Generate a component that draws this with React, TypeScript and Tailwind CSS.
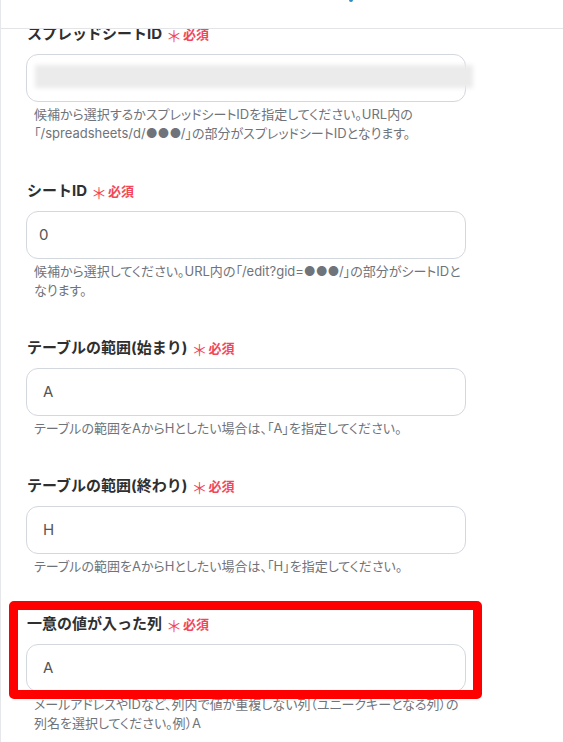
import React from "react";

type Field = {
  label: string;
  value?: string;
  valuePad: string;
  help: React.ReactNode;
  blurred?: boolean;
  highlight?: boolean;
};

const fields: Field[] = [
  {
    label: "スプレッドシートID",
    valuePad: "pl-3",
    blurred: true,
    help: (
      <>
        候補から選択するかスプレッドシートIDを指定してください。URL内の
        <br />
        「/spreadsheets/d/●●●/」の部分がスプレッドシートIDとなります。
      </>
    ),
  },
  {
    label: "シートID",
    value: "0",
    valuePad: "pl-3",
    help: (
      <>
        候補から選択してください。URL内の「/edit?gid=●●●/」の部分がシートIDと
        <br />
        なります。
      </>
    ),
  },
  {
    label: "テーブルの範囲(始まり)",
    value: "A",
    valuePad: "pl-4",
    help: "テーブルの範囲をAからHとしたい場合は、「A」を指定してください。",
  },
  {
    label: "テーブルの範囲(終わり)",
    value: "H",
    valuePad: "pl-4",
    help: "テーブルの範囲をAからHとしたい場合は、「H」を指定してください。",
  },
  {
    label: "一意の値が入った列",
    value: "A",
    valuePad: "pl-4",
    highlight: true,
    help: (
      <>
        メールアドレスやIDなど、列内で値が重複しない列（ユニークキーとなる列）の
        <br />
        列名を選択してください。例）A
      </>
    ),
  },
];

function FieldBlock({ field, first }: { field: Field; first: boolean }) {
  return (
    <div className={`relative ${first ? "" : "mt-9"}`}>
      {/* red annotation frame */}
      {field.highlight && (
        <div className="absolute -left-[16px] -top-[11px] w-[473px] h-[98px] border-[9px] border-[#ff0000] rounded-[5px] z-10 pointer-events-none" />
      )}
      <div className="flex items-center h-6 pl-[2px] text-[15px] font-bold text-[#2f2f2f] leading-6">
        <span>{field.label}</span>
        <span className="relative top-[2px] ml-[4px] text-[16px] font-normal text-[#f2475a]">＊</span>
        <span className="ml-[1px] text-[13px] font-bold text-[#f2475a]">必須</span>
      </div>
      <div
        className={`relative mt-2 ml-px w-[440px] h-12 rounded-xl border border-[#d3d7de] bg-white flex items-center ${field.valuePad} text-[15px] text-[#555]`}
      >
        {field.value}
        {field.blurred && (
          <div className="absolute left-[8px] top-[10px] w-[438px] h-[23px] bg-[#ebebeb] blur-[2px]" />
        )}
      </div>
      <p className="mt-[3px] pl-[9px] text-[13px] leading-[19px] text-[#6f737a] [font-feature-settings:'palt']">
        {field.help}
      </p>
    </div>
  );
}

export default function App() {
  return (
    <div className="h-[742px] w-[563px] overflow-hidden bg-white border-l border-[#e6e7ea] flex flex-col font-[Inter,'Noto_Sans_CJK_JP',sans-serif]">
      {/* header strip */}
      <div className="h-[29px] shrink-0 border-b border-[#e3e4e7] pl-[348px] flex items-start">
        <div className="w-[4px] h-[2px] bg-[#2f8fc0] rounded-b-sm" />
      </div>

      <div className="flex-1 overflow-hidden">
        <div className="-mt-[7px] px-6">
          {fields.map((f, i) => (
            <FieldBlock key={f.label} field={f} first={i === 0} />
          ))}
        </div>
      </div>
    </div>
  );
}
